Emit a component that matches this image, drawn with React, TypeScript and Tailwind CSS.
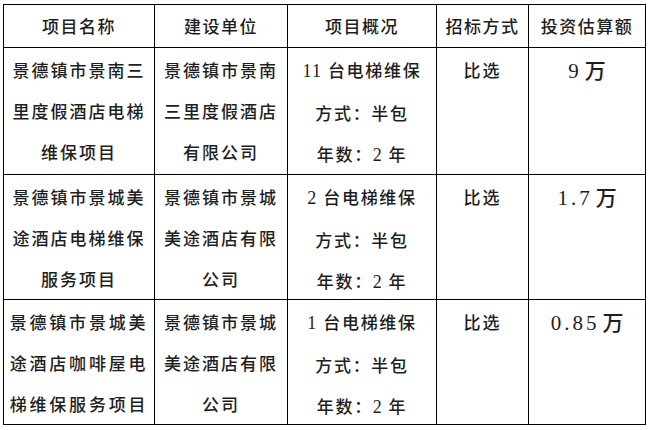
const cjk = { fontFamily: '"Noto Sans CJK SC", "Noto Sans", sans-serif' };
const num = { fontFamily: '"Liberation Serif", "Noto Sans CJK SC", serif' };

const headers = ["项目名称", "建设单位", "项目概况", "招标方式", "投资估算额"];

type Row = {
  name: string[];
  nameSpacing: string;
  unit: string[];
  count: string;
  amount: string;
};

const rows: Row[] = [
  {
    name: ["景德镇市景南三", "里度假酒店电梯", "维保项目"],
    nameSpacing: "tracking-[2px]",
    unit: ["景德镇市景南", "三里度假酒店", "有限公司"],
    count: "11",
    amount: "9",
  },
  {
    name: ["景德镇市景城美", "途酒店电梯维保", "服务项目"],
    nameSpacing: "tracking-[2px]",
    unit: ["景德镇市景城", "美途酒店有限", "公司"],
    count: "2",
    amount: "1.7",
  },
  {
    name: ["景德镇市景城美", "途酒店咖啡屋电", "梯维保服务项目"],
    nameSpacing: "tracking-[2.8px]",
    unit: ["景德镇市景城", "美途酒店有限", "公司"],
    count: "1",
    amount: "0.85",
  },
];

function Lines({ lines, className = "" }: { lines: string[]; className?: string }) {
  return (
    <div className="flex flex-col items-center pt-[1px]">
      {lines.map((l) => (
        <div key={l} className={`leading-[41px] whitespace-nowrap ${className}`}>
          {l}
        </div>
      ))}
    </div>
  );
}

export default function App() {
  return (
    <div className="w-[650px] h-[430px] bg-white pt-[4px] pl-[3px] text-[#1e1e1e] font-medium" style={cjk}>
      <div className="grid grid-cols-[151px_133px_149px_92px_117px] grid-rows-[43px_127px_125px_125px] w-[643px] border-l border-t border-black text-[17px]">
        {headers.map((h) => (
          <div key={h} className="flex items-center justify-center border-r border-b border-black tracking-[1.5px] whitespace-nowrap">
            {h}
          </div>
        ))}
        {rows.map((r) => (
          <div key={r.amount} className="contents">
            <div className="border-r border-b border-black">
              <Lines lines={r.name} className={r.nameSpacing} />
            </div>
            <div className="border-r border-b border-black">
              <Lines lines={r.unit} className="tracking-[2px]" />
            </div>
            <div className="border-r border-b border-black">
              <div className="flex flex-col items-center pt-[1px] tracking-[1.7px]">
                <div className="leading-[41px] whitespace-nowrap">
                  <span style={num} className="text-[18px] tracking-[1px] mr-[6px]">{r.count}</span>
                  台电梯维保
                </div>
                <div className="leading-[41px] whitespace-nowrap">方式：半包</div>
                <div className="leading-[41px] whitespace-nowrap">
                  年数：<span style={num} className="text-[18px] mr-[5px]">2</span>年
                </div>
              </div>
            </div>
            <div className="border-r border-b border-black">
              <div className="flex justify-center pt-[1px]">
                <div className="leading-[41px] tracking-[2px]">比选</div>
              </div>
            </div>
            <div className="border-r border-b border-black">
              <div className="flex justify-center items-baseline pt-[1px] leading-[40px] text-[21px]">
                <span style={num} className="tracking-[3px] mr-[3px]">{r.amount}</span>
                <span>万</span>
              </div>
            </div>
          </div>
        ))}
      </div>
    </div>
  );
}
